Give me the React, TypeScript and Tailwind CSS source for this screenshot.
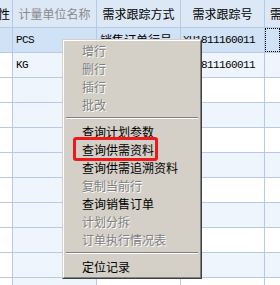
import React from 'react';
import clsx from 'clsx';

const cjk = "font-['Noto_Sans_CJK_SC',sans-serif]";
const mono = "font-['Liberation_Mono',monospace] text-[11px] tracking-[-0.6px]";

type Row = { unit: string; mode: string; track: string };

const rows: Row[] = [
  { unit: 'PCS', mode: '销售订单行号', track: 'XH1811160011' },
  { unit: 'KG', mode: '销售订单行号', track: 'XH1811160011' },
  ...Array.from({ length: 9 }).map(() => ({ unit: '', mode: '', track: '' })),
];

type MenuItem = { label: string; disabled?: boolean; sep?: boolean; marked?: boolean };

const menu: MenuItem[] = [
  { label: '增行', disabled: true },
  { label: '删行', disabled: true },
  { label: '插行', disabled: true },
  { label: '批改', disabled: true },
  { label: '', sep: true },
  { label: '查询计划参数' },
  { label: '查询供需资料', marked: true },
  { label: '查询供需追溯资料' },
  { label: '复制当前行', disabled: true },
  { label: '查询销售订单' },
  { label: '计划分拆', disabled: true },
  { label: '订单执行情况表', disabled: true },
  { label: '', sep: true },
  { label: '定位记录' },
];

function ContextMenu() {
  return (
    <div className="absolute left-[62px] top-[39px] w-[140px] border-t border-l border-[#d4d0c8] border-r border-b border-r-[#404040] border-b-[#404040]">
      <div className="border-t border-l border-white border-r border-b border-r-[#808080] border-b-[#808080] bg-[#d4d0c8] py-px">
        {menu.map((item, i) =>
          item.sep ? (
            <div key={i} className="h-[9px] px-[2px] pt-[3px]">
              <div className="h-px bg-[#808080]" />
              <div className="h-px bg-white" />
            </div>
          ) : (
            <div
              key={i}
              className={clsx(
                'relative h-[18px] pl-[18px] flex items-center text-[12px] leading-none whitespace-nowrap',
                cjk,
                item.disabled ? 'text-[#808080] [text-shadow:1px_1px_0_#ffffff]' : 'text-black'
              )}
            >
              {item.label}
              {item.marked && (
                <div className="absolute left-[9px] top-[-4px] w-[85px] h-[24px] border-[3px] border-[#f01818] rounded-[3px]" />
              )}
            </div>
          )
        )}
      </div>
    </div>
  );
}

export default function App() {
  return (
    <div className="relative w-[280px] h-[285px] overflow-hidden bg-white">
      <div className="grid grid-cols-[12px_83px_83px_83px_1fr] auto-rows-[24px] grid-rows-[27px] gap-px bg-[#b7c9e5] w-[280px]">
        {/* header */}
        <div className={clsx('bg-[#dce8f6] flex items-center justify-end overflow-hidden pr-[2px] text-[12px] text-black', cjk)}>
          <span className="whitespace-nowrap shrink-0">属性</span>
        </div>
        <div className={clsx('bg-[#dce8f6] flex items-center justify-center text-[12px] text-[#8a8a8a] whitespace-nowrap', cjk)}>计量单位名称</div>
        <div className={clsx('bg-[#dce8f6] flex items-center justify-center text-[12px] text-black whitespace-nowrap', cjk)}>需求跟踪方式</div>
        <div className={clsx('bg-[#dce8f6] flex items-center justify-center text-[12px] text-black whitespace-nowrap', cjk)}>需求跟踪号</div>
        <div className={clsx('bg-[#dce8f6] flex items-center pl-[5px] overflow-hidden text-[12px] text-black whitespace-nowrap', cjk)}>需求日期</div>

        {/* body */}
        {rows.map((r, idx) => {
          const selected = idx === 0;
          const tint = idx % 2 === 1;
          const cell = selected ? 'bg-[#d0e2f6]' : tint ? 'bg-[#eef5fd]' : 'bg-white';
          return (
            <React.Fragment key={idx}>
              <div className={selected ? 'bg-[#d0e2f6]' : 'bg-white'} />
              <div className={clsx(selected ? 'bg-[#d0e2f6]' : 'bg-[#eef5fd]', 'flex items-center pl-[3px] text-black', mono)}>{r.unit}</div>
              <div className={clsx(cell, 'flex items-center pl-[3px] text-[12px] text-black whitespace-nowrap overflow-hidden', cjk)}>{r.mode}</div>
              <div className={clsx(cell, 'flex items-center pl-[2px] text-black whitespace-nowrap overflow-hidden', mono)}>{r.track}</div>
              <div className={clsx(cell, 'p-0')}>
                {selected && <div className="w-full h-full border border-dotted border-black" />}
              </div>
            </React.Fragment>
          );
        })}
      </div>

      <ContextMenu />
    </div>
  );
}
